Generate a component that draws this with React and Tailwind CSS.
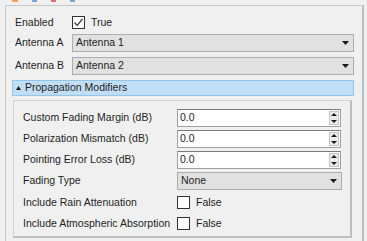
import React from "react";

const Arrow = () => (
    <svg width="7" height="4" viewBox="0 0 7 4" className="shrink-0">
        <path d="M0 0 H7 L3.5 4 Z" fill="#1a1a1a" />
    </svg>
);

const Dropdown = ({ value, className = "" }) => (
    <div className={`flex h-[18px] items-center justify-between border border-[#adadad] bg-[#e1e1e1] pl-[3px] pr-[4px] ${className}`}>
        <span>{value}</span>
        <Arrow />
    </div>
);

const Spin = ({ value }) => (
    <div className="flex h-[18px] w-[164px] items-center justify-between border border-[#a0a0a0] border-t-[#7a7a7a] bg-white pl-[2px] pr-[1px]">
        <span>{value}</span>
        <div className="flex h-[14px] w-[10px] flex-col justify-between border border-[#c4c4c4] bg-[#ececec]">
            <svg width="8" height="5" viewBox="0 0 8 5" className="mx-auto">
                <path d="M1 4 H7 L4 1 Z" fill="#1a1a1a" />
            </svg>
            <svg width="8" height="5" viewBox="0 0 8 5" className="mx-auto">
                <path d="M1 1 H7 L4 4 Z" fill="#1a1a1a" />
            </svg>
        </div>
    </div>
);

const Check = ({ checked, label }) => (
    <div className="flex items-center gap-[6px]">
        <div className="flex h-[13px] w-[13px] items-center justify-center border border-[#333] bg-white">
            {checked && (
                <svg width="11" height="11" viewBox="0 0 11 11">
                    <path d="M1.5 5.5 L4.2 8.3 L9.5 2" stroke="#333" strokeWidth="1.2" fill="none" />
                </svg>
            )}
        </div>
        <span>{label}</span>
    </div>
);

const rows = [
    { label: "Custom Fading Margin (dB)", kind: "spin", value: "0.0" },
    { label: "Polarization Mismatch (dB)", kind: "spin", value: "0.0" },
    { label: "Pointing Error Loss (dB)", kind: "spin", value: "0.0" },
    { label: "Fading Type", kind: "drop", value: "None" },
];

export default function App() {
    return (
        <div className="h-[241px] w-[367px] overflow-hidden whitespace-nowrap bg-[#f0f0f0] text-[10.5px] text-[#1e1e1e] [font-family:'Liberation_Sans',Arial,sans-serif]">
            {/* icons of the toolbar above, cut off */}
            <div className="flex h-[5px] items-start gap-[14px] pl-[12px]">
                <div className="h-[2px] w-[6px] bg-[#f0a060]" />
                <div className="h-[2px] w-[5px] bg-[#7aa6d8]" />
                <div className="h-[2px] w-[5px] bg-[#e07070]" />
                <div className="h-[2px] w-[5px] bg-[#7aa6d8]" />
            </div>

            <div className="ml-[5px] h-[250px] w-[359px] border border-[#c8c8c8] border-r-[2px] border-r-[#bdbdbd] pt-[6px]">
                <div className="flex h-[21px] items-center">
                    <span className="w-[66px] pl-[9px]">Enabled</span>
                    <Check checked label="True" />
                </div>
                <div className="mt-[1px] flex items-center">
                    <span className="w-[66px] pl-[9px]">Antenna A</span>
                    <Dropdown value="Antenna 1" className="w-[282px]" />
                </div>
                <div className="mt-[5px] flex items-center">
                    <span className="w-[66px] pl-[9px]">Antenna B</span>
                    <Dropdown value="Antenna 2" className="w-[282px]" />
                </div>

                <div className="ml-[6px] mt-[5px] flex h-[16px] w-[342px] items-center border border-[#92c4ec] bg-[#c2def5] pl-[3px]">
                    <svg width="5" height="4" viewBox="0 0 5 4" className="mr-[4px]">
                        <path d="M0 4 H5 L2.5 0 Z" fill="#1a1a1a" />
                    </svg>
                    <span>Propagation Modifiers</span>
                </div>

                <div className="ml-[7px] mt-[4px] w-[339px] border border-[#d2d2d2] border-r-[2px] border-b-[2px] border-r-[#bdbdbd] border-b-[#bdbdbd] pb-[2px] pt-[8px]">
                    <div className="flex flex-col gap-[3px]">
                        {rows.map(r => (
                            <div key={r.label} className="flex items-center">
                                <span className="w-[163px] pl-[9px]">{r.label}</span>
                                {r.kind === "spin" ? (
                                    <Spin value={r.value} />
                                ) : (
                                    <Dropdown value={r.value} className="w-[165px]" />
                                )}
                            </div>
                        ))}
                    </div>
                    <div className="mt-[2px] flex h-[21px] items-center">
                        <span className="w-[163px] pl-[9px]">Include Rain Attenuation</span>
                        <Check label="False" />
                    </div>
                    <div className="flex h-[21px] items-center">
                        <span className="w-[163px] pl-[9px]">Include Atmospheric Absorption</span>
                        <Check label="False" />
                    </div>
                </div>
            </div>
        </div>
    );
}
